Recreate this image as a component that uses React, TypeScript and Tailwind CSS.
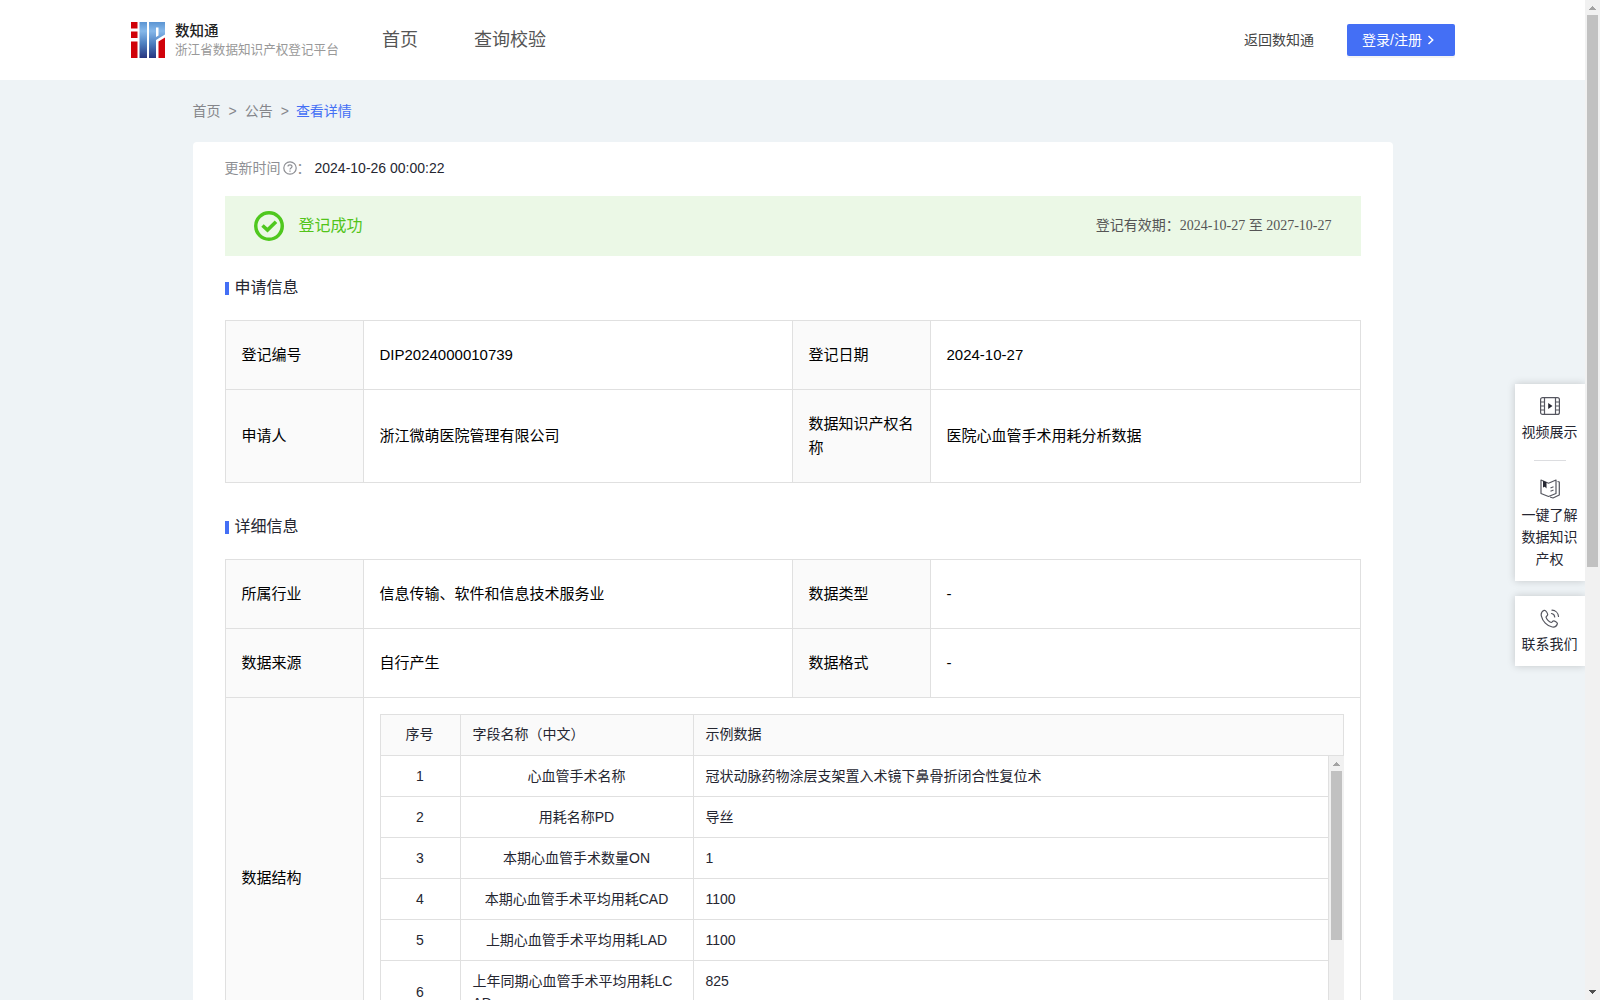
/**
 * Registration notice detail page
 */

import React from 'react';

const FIELD_ROWS = [
  { name: '心血管手术名称', sample: '冠状动脉药物涂层支架置入术镜下鼻骨折闭合性复位术' },
  { name: '用耗名称PD', sample: '导丝' },
  { name: '本期心血管手术数量ON', sample: '1' },
  { name: '本期心血管手术平均用耗CAD', sample: '1100' },
  { name: '上期心血管手术平均用耗LAD', sample: '1100' },
  { name: '上年同期心血管手术平均用耗LCAD', sample: '825' },
];

function Logo() {
  return (
    <svg className="h-9 w-[34px] shrink-0" viewBox="0 0 34 36">
      <defs>
        <linearGradient id="logoBlue" gradientUnits="userSpaceOnUse" x1="0" y1="0" x2="0" y2="36">
          <stop offset="0" stopColor="#5b94d2" />
          <stop offset="0.25" stopColor="#86b8ea" />
          <stop offset="0.6" stopColor="#4d7fc0" />
          <stop offset="1" stopColor="#27357f" />
        </linearGradient>
      </defs>
      <path d="M0 0h6.500v6.500H0zM0 9.500h6.500v6.500H0zM0 19.500h6.500v16.500H0z" fill="#d0020a" />
      <path d="M8.500 0H16V36H8.500z" fill="url(#logoBlue)" />
      <path d="M18 0H34V12.500L25 18V36H18zM25 5.500V15L27.500 13.500V5.500z" fill="url(#logoBlue)" fillRule="evenodd" />
      <path d="M27.500 19.500L34 15.500V36H27.500z" fill="#d0020a" />
    </svg>
  );
}

function Header() {
  return (
    <header className="flex h-20 shrink-0 items-center bg-white pr-[130px] pl-[131px]">
      <Logo />
      <div className="ml-[10px] w-[207px] pt-px">
        <div className="text-[14.5px] leading-[19px] font-medium text-[#222]">数知通</div>
        <div className="text-[12.600px] leading-[19px] text-[#999]">浙江省数据知识产权登记平台</div>
      </div>
      <nav className="flex gap-14 text-lg text-[#555]">
        <a>首页</a>
        <a>查询校验</a>
      </nav>
      <a className="ml-auto text-sm text-[#444]">返回数知通</a>
      <button className="ml-[33px] flex h-8 w-[108px] items-center rounded-[2px] bg-[#446ff5] pb-px pl-[15px] text-sm text-white shadow-[0_2px_0_rgba(0,0,0,0.045)]">
        登录/注册
        <svg className="ml-[5px] h-2.5 w-2" viewBox="0 0 8 10" fill="none" stroke="currentColor" strokeWidth="1.5">
          <path d="M1.500 1L5.700 5L1.500 9" />
        </svg>
      </button>
    </header>
  );
}

function SectionTitle({ children }: { children: React.ReactNode }) {
  return (
    <div className="flex h-6 items-center text-base text-[#252631]">
      <span className="mt-px mr-[6px] h-[13px] w-1 bg-[#446ff5]" />
      {children}
    </div>
  );
}

function LabelCell({ children }: { children: React.ReactNode }) {
  return (
    <div className="flex items-center border-r border-[#e0e0e0] bg-[#fafafa] pr-[14px] pl-4">{children}</div>
  );
}

function InfoRow({ items, height }: { items: string[]; height: string }) {
  return (
    <div
      className={`grid grid-cols-[138px_429px_138px_1fr] border-b border-[#e0e0e0] text-[15px] leading-6 text-black ${height}`}
    >
      <LabelCell>{items[0]}</LabelCell>
      <div className="flex items-center border-r border-[#e0e0e0] px-4">{items[1]}</div>
      <LabelCell>{items[2]}</LabelCell>
      <div className="flex items-center px-4">{items[3]}</div>
    </div>
  );
}

function FieldTable() {
  return (
    <div className="h-[328px] text-sm leading-[22px] text-[#252631]">
      <div className="grid h-[42px] grid-cols-[80px_233px_1fr] border border-[#e0e0e0] bg-[#fafafa] leading-[39px]">
        <div className="border-r border-[#e0e0e0] pr-px text-center">序号</div>
        <div className="border-r border-[#e0e0e0] px-3">字段名称（中文）</div>
        <div className="px-3">示例数据</div>
      </div>
      <div className="flex h-[286px] overflow-hidden">
        <div className="flex-1 border-x border-[#e0e0e0]">
          {FIELD_ROWS.map((row, i) => (
            <div key={row.name} className="grid grid-cols-[80px_233px_1fr] border-b border-[#e0e0e0]">
              <div className="flex items-center justify-center border-r border-[#e0e0e0]">{i + 1}</div>
              <div className="flex items-center justify-center border-r border-[#e0e0e0] px-3 py-[9px] break-all">
                {row.name}
              </div>
              <div className="px-3 py-[9px]">{row.sample}</div>
            </div>
          ))}
        </div>
        <div className="flex w-[15px] flex-col items-center bg-[#f1f1f1]">
          <ScrollArrow className="mt-[6px] mb-[5px] text-[#a3a3a3]" />
          <div className="h-[169px] w-[11px] bg-[#c1c1c1]" />
        </div>
      </div>
    </div>
  );
}

function ScrollArrow({ className }: { className: string }) {
  return (
    <svg className={`h-1 w-[7px] shrink-0 ${className}`} viewBox="0 0 7 4" shapeRendering="crispEdges">
      <path d="M3 0h1v1h1v1h1v1h1v1H0V3h1V2h1V1h1z" fill="currentColor" />
    </svg>
  );
}

function SideBar() {
  return (
    <aside className="absolute top-[384px] right-0 w-[70px] text-center text-sm leading-[22px] text-[#252631]">
      <div className="flex h-[197px] flex-col items-center bg-white pt-[13px] shadow-[0_0_8px_rgba(0,0,0,0.18)]">
        <svg className="h-[18px] w-5" viewBox="0 0 20 18" fill="none" stroke="#55565f" strokeWidth="1.2">
          <rect x="0.600" y="0.600" width="18.800" height="16.800" rx="2" />
          <path d="M4.500 .6V17.400M15.500 .6V17.400M.6 5H4.500M.6 9H4.500M.6 13H4.500M15.500 5H19.400M15.500 9H19.400M15.500 13H19.400" />
          <path d="M8.200 6V12L12.500 9z" fill="#252631" stroke="none" />
        </svg>
        <div className="mt-[6px] pr-px">视频展示</div>
        <div className="mt-[17px] h-px w-8 bg-[#dcdde0]" />
        <svg className="mt-[18px] h-5 w-5" viewBox="0 0 20 20" fill="none" stroke="#55565f" strokeWidth="1.2" strokeLinejoin="round">
          <path d="M1 1L8.500 4.200L16 1V14.500L8.500 17.500L1 14.500z" />
          <path d="M17.500 2.500L19.300 3V16L13 19L10 18" />
          <path d="M10.500 9L13.500 7.800M10.500 12.200L13.500 11" />
          <path d="M3 1.800L6.500 3.200V9.500L4.800 7.800L3 8.500z" fill="#252631" stroke="none" />
        </svg>
        <div className="mt-[5px] mr-px w-14">一键了解数据知识产权</div>
      </div>
      <div className="mt-[15px] flex h-[70px] flex-col items-center bg-white pt-[13px] shadow-[0_0_8px_rgba(0,0,0,0.18)]">
        <svg className="h-[19px] w-5" viewBox="0 0 20 19" fill="none" stroke="#55565f" strokeWidth="1.2" strokeLinecap="round" strokeLinejoin="round">
          <path d="M4.200 1.300C2 2.200 .8 4 1.300 6.800C2.600 12.300 7 17 12.300 18C14.800 18.300 16.900 16.800 17.400 14.500C17.500 13.500 14.500 11.700 13.500 11.900C12.500 12 12.200 13.600 11.200 13.500C9 13 6.500 10.200 6 8.200C6 7.200 7.700 6.700 7.700 5.700C7.700 4.600 6 1 4.200 1.300z" />
          <path d="M11.500 4.500C13.200 4.700 14.600 6.200 14.700 8M12 1.200C15.500 1.300 18.200 4 18.500 7.500" />
        </svg>
        <div className="mt-[5px] pr-px">联系我们</div>
      </div>
    </aside>
  );
}

function App() {
  return (
    <div className="flex h-screen overflow-hidden bg-[#eef3f6] font-['Liberation_Sans','Noto_Sans_CJK_SC',sans-serif]">
      <div className="relative flex flex-1 flex-col overflow-hidden">
        <Header />
        <div className="mx-auto w-[1200px]">
          <div className="flex h-[62px] items-center gap-2 pb-px text-sm text-[#85868b]">
            <span>首页</span>
            <span>&gt;</span>
            <span>公告</span>
            <span>&gt;</span>
            <span className="-ml-px text-[#446ff5]">查看详情</span>
          </div>

          <main className="h-[1100px] rounded bg-white px-8">
            <div className="flex h-[54px] items-center pb-[2px] text-sm text-[#8e8f94]">
              更新时间
              <svg className="ml-[2px] h-[14px] w-[14px]" viewBox="0 0 14 14" fill="none" stroke="currentColor" strokeWidth="1.2">
                <circle cx="7" cy="7" r="6.200" />
                <path d="M5 5.600C5 3.200 9 3.200 9 5.500C9 6.900 7 6.900 7 8.400M7 9.600V10.800" />
              </svg>
              <span className="w-[18px]">：</span>
              <span className="text-[#252631]">2024-10-26 00:00:22</span>
            </div>

            <div className="flex h-[60px] items-center bg-[#ebf8e6] px-[29px]">
              <svg className="h-[30px] w-[30px]" viewBox="0 0 30 30" fill="none" stroke="#4fc81e">
                <circle cx="15" cy="15" r="13.250" strokeWidth="3.5" />
                <path d="M8.500 14.500L13.500 19L22 10.800" strokeWidth="3.6" />
              </svg>
              <span className="ml-[15px] pb-px text-base text-[#52c41a]">登记成功</span>
              <span className="ml-auto pb-px font-['Liberation_Serif','Noto_Sans_CJK_SC',serif] text-sm text-[#555]">
                登记有效期：2024-10-27 至 2027-10-27
              </span>
            </div>

            <div className="pt-5">
              <SectionTitle>申请信息</SectionTitle>
            </div>
            <div className="mt-5 border border-b-0 border-[#e0e0e0]">
              <InfoRow height="h-[69px]" items={['登记编号', 'DIP2024000010739', '登记日期', '2024-10-27']} />
              <InfoRow
                height="h-[93px]"
                items={['申请人', '浙江微萌医院管理有限公司', '数据知识产权名称', '医院心血管手术用耗分析数据']}
              />
            </div>

            <div className="pt-8">
              <SectionTitle>详细信息</SectionTitle>
            </div>
            <div className="mt-5 border border-b-0 border-[#e0e0e0]">
              <InfoRow height="h-[69px]" items={['所属行业', '信息传输、软件和信息技术服务业', '数据类型', '-']} />
              <InfoRow height="h-[69px]" items={['数据来源', '自行产生', '数据格式', '-']} />
              <div className="grid grid-cols-[138px_1fr] border-b border-[#e0e0e0] text-[15px] text-black">
                <LabelCell>数据结构</LabelCell>
                <div className="p-4">
                  <FieldTable />
                </div>
              </div>
            </div>
          </main>
        </div>
        <SideBar />
      </div>

      {/* page scrollbar */}
      <div className="flex w-[15px] shrink-0 flex-col items-center bg-[#f1f1f1]">
        <ScrollArrow className="mt-[6px] mb-[5px] text-[#a3a3a3]" />
        <div className="h-[552px] w-[11px] bg-[#c1c1c1]" />
        <ScrollArrow className="mt-auto mb-[6px] rotate-180 text-[#505050]" />
      </div>
    </div>
  );
}

export default App;
